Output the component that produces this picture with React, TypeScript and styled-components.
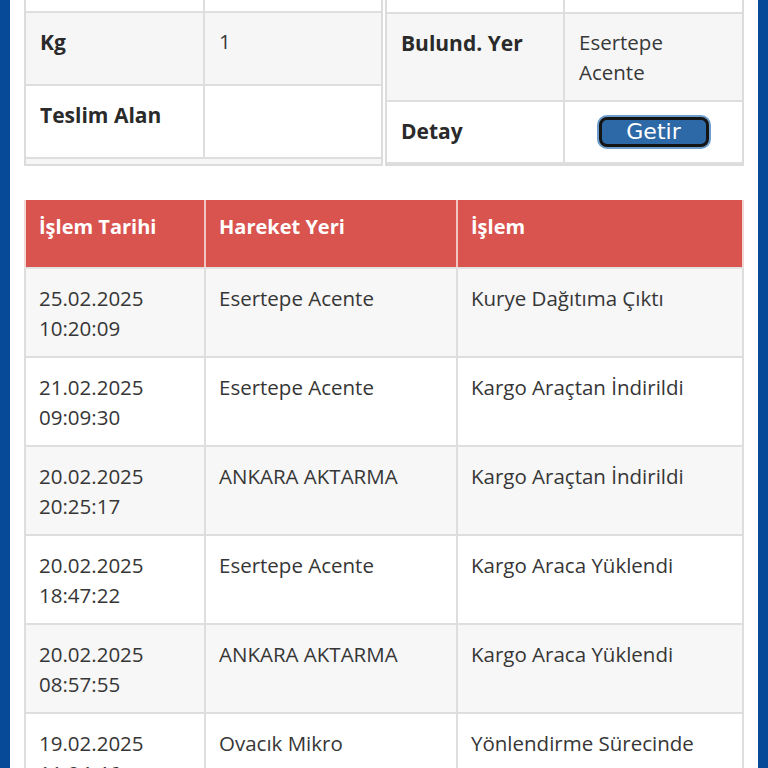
import React from "react";
import styled, { createGlobalStyle } from "styled-components";

const Global = createGlobalStyle`
  html, body { margin: 0; padding: 0; background: #ffffff; }
  body { font-family: "Open Sans", "Noto Sans", sans-serif; color: #333333; }
`;

const Page = styled.div`
  border-left: 10px solid #074a97;
  border-right: 10px solid #074a97;
  padding: 0 14px 40px 14px;
  background: #ffffff;
  min-height: 900px;
`;

const TopGrid = styled.div`
  display: grid;
  grid-template-columns: 1fr 1fr;
  gap: 2px;
  margin-bottom: 34px;
`;

const Panel = styled.div`
  border: 2px solid #dcdcdc;
  border-top: none;
  background: #f6f6f6;
`;

const InfoTable = styled.table`
  width: 100%;
  border-collapse: collapse;
  table-layout: fixed;
`;

const InfoRow = styled.tr<{ $h: number; $gray?: boolean }>`
  height: ${(p) => p.$h}px;
  background: ${(p) => (p.$gray ? "#f6f6f6" : "#ffffff")};
`;

const Label = styled.th`
  text-align: left;
  vertical-align: top;
  font-weight: 700;
  font-size: 21px;
  line-height: 30px;
  padding: 14px 14px 0 14px;
  border: 2px solid #dedede;
  border-left: none;
  color: #2a2a2a;
`;

const Value = styled.td<{ $center?: boolean }>`
  text-align: ${(p) => (p.$center ? "center" : "left")};
  vertical-align: top;
  font-size: 20.5px;
  line-height: 30px;
  padding: 13px 14px 0 14px;
  border: 2px solid #dedede;
  border-right: none;
  color: #383838;
`;

const GetirButton = styled.button`
  font-family: "DejaVu Sans", Verdana, sans-serif;
  font-size: 22px;
  line-height: 22px;
  color: #ffffff;
  background: #2d69a6;
  border: 3px solid #151515;
  border-radius: 8px;
  box-shadow: 0 0 0 2px #6e9ccc;
  width: 110px;
  height: 30px;
  padding: 0;
  margin-top: 2px;
  cursor: pointer;
`;

const MainTable = styled.table`
  width: 100%;
  border-collapse: collapse;
  table-layout: fixed;
`;

const HeadCell = styled.th`
  background: #d9534f;
  color: #ffffff;
  text-align: left;
  vertical-align: top;
  font-size: 20px;
  font-weight: 700;
  line-height: 30px;
  height: 68px;
  box-sizing: border-box;
  padding: 12px 13px 0 13px;
  border-left: 2px solid #f2c5c3;
  border-right: 2px solid #f2c5c3;
  border-bottom: 2px solid #e2e2e2;
  &:first-child { border-left: 2px solid #f0d6d5; }
  &:last-child { border-right: 2px solid #f0d6d5; }
`;

const DataRow = styled.tr<{ $gray: boolean }>`
  background: ${(p) => (p.$gray ? "#f7f7f7" : "#ffffff")};
`;

const DataCell = styled.td`
  vertical-align: top;
  font-size: 20.5px;
  line-height: 30px;
  height: 89px;
  box-sizing: border-box;
  padding: 14px 12px 0 13px;
  border: 2px solid #dedede;
  color: #363636;
`;

const rows = [
  ["25.02.2025", "10:20:09", "Esertepe Acente", "Kurye Dağıtıma Çıktı"],
  ["21.02.2025", "09:09:30", "Esertepe Acente", "Kargo Araçtan İndirildi"],
  ["20.02.2025", "20:25:17", "ANKARA AKTARMA", "Kargo Araçtan İndirildi"],
  ["20.02.2025", "18:47:22", "Esertepe Acente", "Kargo Araca Yüklendi"],
  ["20.02.2025", "08:57:55", "ANKARA AKTARMA", "Kargo Araca Yüklendi"],
  ["19.02.2025", "11:04:46", "Ovacık Mikro", "Yönlendirme Sürecinde"],
];

export default function App() {
  return (
    <>
      <Global />
      <Page>
        <TopGrid>
          <Panel>
            <InfoTable>
              <colgroup>
                <col style={{ width: 178 }} />
                <col />
              </colgroup>
              <tbody>
                <InfoRow $h={12}>
                  <Label style={{ padding: 0, borderTop: "none" }} />
                  <Value style={{ padding: 0, borderTop: "none" }} />
                </InfoRow>
                <InfoRow $h={73} $gray>
                  <Label>Kg</Label>
                  <Value>1</Value>
                </InfoRow>
                <InfoRow $h={73}>
                  <Label>Teslim Alan</Label>
                  <Value></Value>
                </InfoRow>
              </tbody>
            </InfoTable>
          </Panel>
          <Panel>
            <InfoTable>
              <colgroup>
                <col style={{ width: 177 }} />
                <col />
              </colgroup>
              <tbody>
                <InfoRow $h={13}>
                  <Label style={{ padding: 0, borderTop: "none" }} />
                  <Value style={{ padding: 0, borderTop: "none" }} />
                </InfoRow>
                <InfoRow $h={88} $gray>
                  <Label>Bulund. Yer</Label>
                  <Value>
                    Esertepe
                    <br />
                    Acente
                  </Value>
                </InfoRow>
                <InfoRow $h={62}>
                  <Label>Detay</Label>
                  <Value $center>
                    <GetirButton>Getir</GetirButton>
                  </Value>
                </InfoRow>
              </tbody>
            </InfoTable>
          </Panel>
        </TopGrid>
        <MainTable>
          <colgroup>
            <col style={{ width: 180 }} />
            <col style={{ width: 252 }} />
            <col />
          </colgroup>
          <thead>
            <tr>
              <HeadCell>İşlem Tarihi</HeadCell>
              <HeadCell>Hareket Yeri</HeadCell>
              <HeadCell>İşlem</HeadCell>
            </tr>
          </thead>
          <tbody>
            {rows.map((r, i) => (
              <DataRow key={i} $gray={i % 2 === 0}>
                <DataCell>
                  {r[0]}
                  <br />
                  {r[1]}
                </DataCell>
                <DataCell>{r[2]}</DataCell>
                <DataCell>{r[3]}</DataCell>
              </DataRow>
            ))}
          </tbody>
        </MainTable>
      </Page>
    </>
  );
}
